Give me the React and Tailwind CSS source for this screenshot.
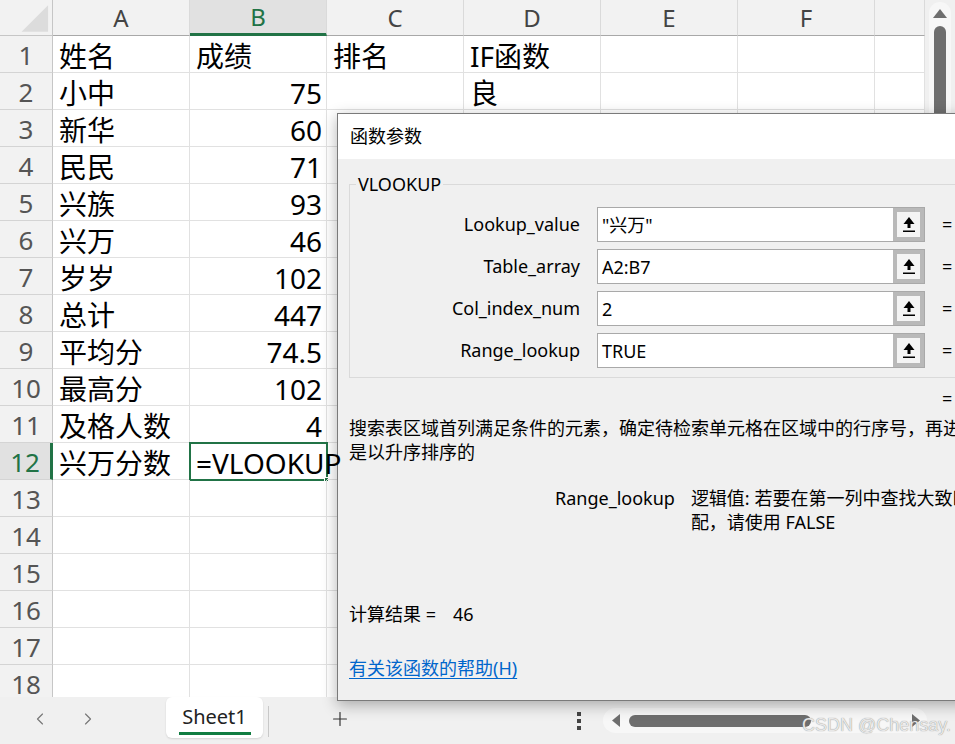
import React from "react";
import { ChevronLeft, ChevronRight, Plus } from "lucide-react";

const colNames = ["A", "B", "C", "D", "E", "F", ""];
const colWidths = ["w-[137px]", "w-[137px]", "w-[137px]", "w-[137px]", "w-[137px]", "w-[137px]", "w-[50px]"];

const rows = [
  ["姓名", "成绩", "排名", "IF函数"],
  ["小中", "75", "", "良"],
  ["新华", "60"],
  ["民民", "71"],
  ["兴族", "93"],
  ["兴万", "46"],
  ["岁岁", "102"],
  ["总计", "447"],
  ["平均分", "74.5"],
  ["最高分", "102"],
  ["及格人数", "4"],
  ["兴万分数", "=VLOOKUP"],
  [],
  [],
  [],
  [],
  [],
  [],
];

const fields = [
  { label: "Lookup_value", value: "\"兴万\"" },
  { label: "Table_array", value: "A2:B7" },
  { label: "Col_index_num", value: "2" },
  { label: "Range_lookup", value: "TRUE" },
];

function RefButton() {
  return (
    <div className="w-[31px] h-full bg-[#b9b9b9] p-[4px] shrink-0">
      <div className="w-full h-full bg-[#f4f4f4] flex items-center justify-center">
        <svg width="14" height="18" viewBox="0 0 14 18">
          <polygon points="7,1 1.5,8 12.5,8" fill="#000" />
          <rect x="5.5" y="7" width="3" height="5" fill="#000" />
          <rect x="1" y="14.5" width="12" height="1.5" fill="#000" />
        </svg>
      </div>
    </div>
  );
}

function Sheet() {
  return (
    <div className="w-[925px] h-[697px] overflow-hidden bg-white font-['Noto_Sans','Noto_Sans_CJK_SC',sans-serif]">
      {/* column header */}
      <div className="flex h-[36px]">
        <div className="w-[53px] shrink-0 h-full bg-[#f2f2f2] border-r border-b border-[#c6c6c6] flex items-center justify-center">
          <svg width="53" height="36" viewBox="0 0 53 36">
            <polygon points="49,5 49,32 22,32" fill="#dcdcdc" />
          </svg>
        </div>
        {colNames.map((c, i) => (
          <div
            key={i}
            className={
              colWidths[i] +
              " shrink-0 h-full flex items-center justify-center text-[24px] border-r border-[#dadada] " +
              (c === "B"
                ? "bg-[#e1e1e1] text-[#217346] border-b-[3px] border-b-[#217346]"
                : "bg-[#f2f2f2] text-[#444] border-b border-b-[#a8a8a8]")
            }
          >
            {c}
          </div>
        ))}
      </div>
      {/* rows */}
      {rows.map((r, ri) => {
        const active = ri === 11;
        return (
          <div key={ri} className="flex h-[37px]">
            <div
              className={
                "w-[53px] shrink-0 h-full flex items-center justify-center text-[26px] pt-[2px] border-b border-[#d4d4d4] " +
                (active
                  ? "bg-[#e1e1e1] text-[#217346] border-r-[3px] border-r-[#217346]"
                  : "bg-[#f2f2f2] text-[#555] border-r border-r-[#c6c6c6]")
              }
            >
              {ri + 1}
            </div>
            {colNames.map((c, ci) => {
              const v = r[ci] || "";
              const isNum = /^[\d.]+$/.test(v);
              const sel = active && ci === 1;
              return (
                <div
                  key={ci}
                  className={
                    colWidths[ci] +
                    " shrink-0 h-full relative flex items-center pt-[3px] text-[28px] text-black whitespace-nowrap border-r border-b border-[#e1e1e1] " +
                    (isNum ? "justify-end pr-[4px]" : "pl-[6px]")
                  }
                >
                  {sel && (
                    <div className="absolute -left-px -top-px w-[139px] h-[39px] border-2 border-[#217346] pointer-events-none">
                      <div className="absolute -right-[3px] -bottom-[3px] w-[5px] h-[5px] bg-[#217346] border border-white" />
                    </div>
                  )}
                  <span className="relative z-10">{v}</span>
                </div>
              );
            })}
          </div>
        );
      })}
    </div>
  );
}

function VScroll() {
  return (
    <div className="w-[30px] h-[697px] bg-[#f0f0f0] pt-[2px] px-[4px]">
      <div className="h-full bg-[#f7f7f7] rounded-full flex flex-col items-center pt-[7px]">
        <svg width="14" height="9" viewBox="0 0 14 9">
          <polygon points="7,0 14,9 0,9" fill="#6e6e6e" />
        </svg>
        <div className="mt-[8px] w-[12px] h-[320px] bg-[#6e6e6e] rounded-t-full" />
      </div>
    </div>
  );
}

function TabBar() {
  return (
    <div className="h-[47px] bg-[#f0f0f0] flex items-start font-['Noto_Sans','Noto_Sans_CJK_SC',sans-serif]">
      <ChevronLeft size={20} strokeWidth={1.4} color="#777" className="ml-[30px] mt-[12px]" />
      <ChevronRight size={20} strokeWidth={1.4} color="#777" className="ml-[28px] mt-[12px]" />
      <div className="ml-[68px] w-[97px] h-[41px] bg-white rounded-[6px] shadow-[0_1px_2px_rgba(0,0,0,0.12)] flex flex-col items-center">
        <span className="text-[20px] text-[#222] leading-[26px] mt-[7px]">Sheet1</span>
        <div className="mt-[2px] w-[72px] h-[3px] bg-[#107c41]" />
      </div>
      <div className="ml-[5px] mt-[9px] w-px h-[31px] bg-[#c8c8c8]" />
      <Plus size={22} strokeWidth={1.3} color="#333" className="ml-[60px] mt-[11px]" />
      <div className="ml-[226px] mt-[15px] flex flex-col gap-[3px]">
        <div className="w-[4px] h-[4px] bg-[#444]" />
        <div className="w-[4px] h-[4px] bg-[#444]" />
        <div className="w-[4px] h-[4px] bg-[#444]" />
      </div>
      <div className="ml-[22px] mt-[11px] w-[324px] h-[25px] bg-[#f7f7f7] rounded-full flex items-center pl-[9px]">
        <svg width="8" height="13" viewBox="0 0 8 13">
          <polygon points="0,6.5 8,0 8,13" fill="#6e6e6e" />
        </svg>
        <div className="ml-[9px] w-[182px] h-[12px] bg-[#6e6e6e] rounded-full" />
        <svg width="8" height="13" viewBox="0 0 8 13" className="ml-[101px]">
          <polygon points="8,6.5 0,0 0,13" fill="#6e6e6e" />
        </svg>
      </div>
    </div>
  );
}

function Dialog() {
  return (
    <div className="absolute left-[337px] top-[113px] w-[700px] h-[588px] overflow-hidden border border-[#7a7a7a] bg-[#f0f0f0] shadow-[0_4px_14px_rgba(0,0,0,0.3)] text-[18px] text-black font-['Noto_Sans','Noto_Sans_CJK_SC',sans-serif]">
      <div className="h-[45px] bg-white flex items-center pl-[12px]">函数参数</div>
      <div className="px-[11px]">
        <fieldset className="mt-[13px] w-[800px] border border-[#dadada] pt-[11px] pb-[9px]">
          <legend className="ml-[6px] px-[2px] leading-[24px]">VLOOKUP</legend>
          <div className="flex flex-col gap-[7px]">
            {fields.map((f) => (
              <div key={f.label} className="flex items-center h-[35px]">
                <div className="w-[230px] text-right">{f.label}</div>
                <div className="ml-[17px] w-[328px] h-full border border-[#a9a9a9] bg-white flex">
                  <div className="flex-1 pl-[4px] flex items-center leading-[24px]">{f.value}</div>
                  <RefButton />
                </div>
                <div className="ml-[17px]">=</div>
              </div>
            ))}
          </div>
        </fieldset>
        <div className="mt-[8px] ml-[593px] leading-[24px]">=</div>
        <div className="mt-[6px] leading-[24px] whitespace-nowrap">
          搜索表区域首列满足条件的元素，确定待检索单元格在区域中的行序号，再进一步返回选定单元格的值。默认情况下，表
          <br />
          是以升序排序的
        </div>
        <div className="mt-[22px] ml-[206px] flex gap-[16px] leading-[24px] whitespace-nowrap">
          <div>Range_lookup</div>
          <div>
            逻辑值: 若要在第一列中查找大致匹配，请使用 TRUE 或省略；若要查找精确匹
            <br />
            配，请使用 FALSE
          </div>
        </div>
        <div className="mt-[68px] leading-[24px] flex">
          <span>计算结果 =</span>
          <span className="ml-[17px]">46</span>
        </div>
        <div className="mt-[30px] leading-[24px]">
          <a className="text-[#0066cc] underline underline-offset-[3px]">有关该函数的帮助(H)</a>
        </div>
      </div>
    </div>
  );
}

export default function App() {
  return (
    <div className="relative w-[955px] h-[744px] overflow-hidden bg-[#f0f0f0]">
      <div className="flex">
        <Sheet />
        <VScroll />
      </div>
      <TabBar />
      <Dialog />
      <div className="absolute right-[4px] bottom-[5px] text-[18px] text-[#e8e8e8] font-['Liberation_Sans',Arial,sans-serif] [text-shadow:0_0_1px_#7a7a7a]">
        CSDN @Chensay.
      </div>
    </div>
  );
}
